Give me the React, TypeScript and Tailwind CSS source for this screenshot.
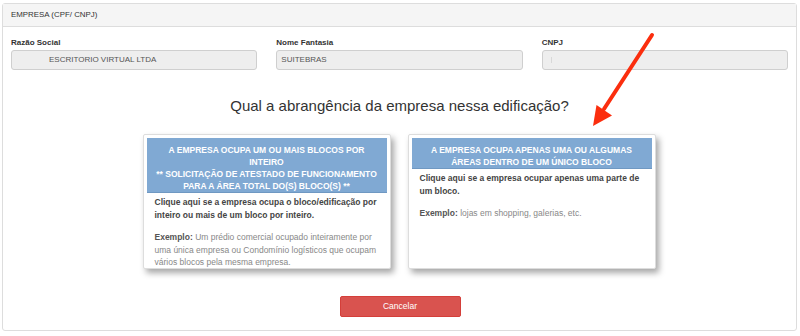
import React from "react";

const font = { fontFamily: '"Liberation Sans", Arial, Helvetica, sans-serif' };

function Field({ label, value, indent, cursor }: { label: string; value?: string; indent?: boolean; cursor?: boolean }) {
  return (
    <div className="flex flex-col">
      <div className="text-[8px] leading-[12px] font-bold text-[#333] mb-px">{label}</div>
      <div
        className={
          "h-[20px] rounded-[3px] border border-[#cfcfcf] bg-[#eeeeee] flex items-center text-[8px] text-[#555] " +
          (indent ? "pl-[37px]" : "pl-[4px]")
        }
      >
        {value}
        {cursor && <span className="ml-[4px] w-px h-[6px] bg-[#d8d8d8]" />}
      </div>
    </div>
  );
}

export default function App() {
  return (
    <div className="relative w-[800px] h-[336px] bg-white pt-[3px] pl-[2px] pr-[3px]" style={font}>
      <div className="h-[328px] border border-[#dddddd] rounded-[3px] flex flex-col">
        <div className="h-[23px] bg-[#f5f5f5] border-b border-[#dddddd] flex items-center pl-[8px] text-[7.9px] text-[#333]">
          EMPRESA (CPF/ CNPJ)
        </div>
        <div className="px-[8px] pt-[10px] grid grid-cols-3 gap-x-[19px]">
          <Field label="Razão Social" value="ESCRITORIO VIRTUAL LTDA" indent />
          <Field label="Nome Fantasia" value="SUITEBRAS" />
          <Field label="CNPJ" cursor />
        </div>
        <div className="mt-[27px] text-center text-[15px] leading-[18px] text-[#333]">
          Qual a abrangência da empresa nessa edificação?
        </div>
        <div className="mt-[19px] flex justify-center gap-[17px] pr-px">
          <div className="w-[248px] h-[135px] overflow-hidden bg-white border border-[#dddddd] rounded-[2px] p-[3px] shadow-[3px_4px_6px_rgba(0,0,0,0.35)]">
            <div className="bg-[#80a9d3] text-white font-bold text-[8.5px] leading-[12px] text-center pt-[6px] pb-0 border-b border-[#6f98c2]">
              A EMPRESA OCUPA UM OU MAIS BLOCOS POR
              <br />
              INTEIRO
              <br />
              ** SOLICITAÇÃO DE ATESTADO DE FUNCIONAMENTO
              <br />
              PARA A ÁREA TOTAL DO(S) BLOCO(S) **
            </div>
            <div className="pl-[8px] pt-[3px] text-[8.5px] leading-[12.6px] whitespace-nowrap">
              <div className="font-bold text-[#444]">
                Clique aqui se a empresa ocupa o bloco/edificação por
                <br />
                inteiro ou mais de um bloco por inteiro.
              </div>
              <div className="mt-[10px] text-[#888]">
                <span className="font-bold text-[#555]">Exemplo:</span> Um prédio comercial ocupado inteiramente por
                <br />
                uma única empresa ou Condomínio logísticos que ocupam
                <br />
                vários blocos pela mesma empresa.
              </div>
            </div>
          </div>
          <div className="w-[248px] h-[135px] overflow-hidden bg-white border border-[#dddddd] rounded-[2px] p-[3px] shadow-[3px_4px_6px_rgba(0,0,0,0.35)]">
            <div className="bg-[#80a9d3] text-white font-bold text-[8.5px] leading-[12px] text-center pt-[6px] pb-0 border-b border-[#6f98c2]">
              A EMPRESA OCUPA APENAS UMA OU ALGUMAS
              <br />
              ÁREAS DENTRO DE UM ÚNICO BLOCO
            </div>
            <div className="pl-[8px] pt-[3px] text-[8.5px] leading-[12.6px] whitespace-nowrap">
              <div className="font-bold text-[#444]">
                Clique aqui se a empresa ocupar apenas uma parte de
                <br />
                um bloco.
              </div>
              <div className="mt-[10px] text-[#888]">
                <span className="font-bold text-[#555]">Exemplo:</span> lojas em shopping, galerias, etc.
              </div>
            </div>
          </div>
        </div>
        <div className="mt-[27px] flex justify-center">
          <button className="w-[121px] h-[21px] ml-px bg-[#d9534f] border border-[#d43f3a] rounded-[2px] text-white text-[8.5px] flex items-center justify-center">
            Cancelar
          </button>
        </div>
      </div>
      <svg className="absolute left-0 top-0 pointer-events-none" width="800" height="336">
        <line x1="652" y1="35" x2="604" y2="109" stroke="#fb2e0e" strokeWidth="4" strokeLinecap="round" />
        <polygon points="593,126 596.5,105 612,115.5" fill="#fb2e0e" />
      </svg>
    </div>
  );
}
